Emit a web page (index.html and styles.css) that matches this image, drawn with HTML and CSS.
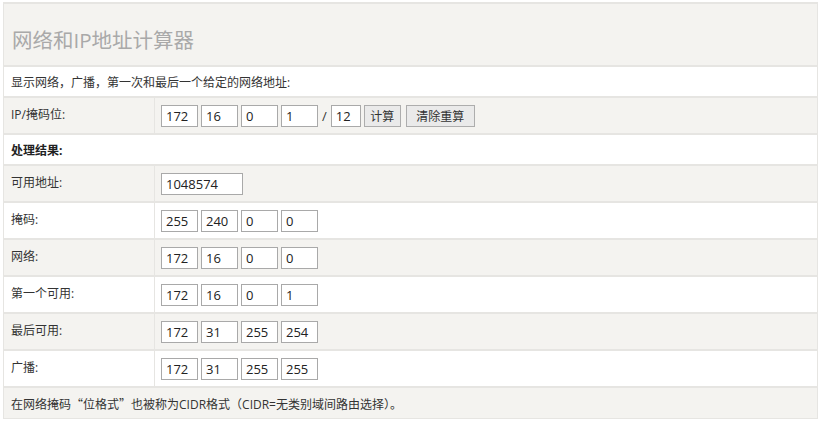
FILE: index.html
```html
<!DOCTYPE html>
<html lang="zh">
<head>
<meta charset="utf-8">
<title>网络和IP地址计算器</title>
<link rel="stylesheet" href="styles.css">
</head>
<body>
<div class="wrap">
<table class="calc">
  <tr class="head"><td colspan="2"><h1>网络和IP地址计算器</h1></td></tr>
  <tr class="white"><td colspan="2" class="desc">显示网络，广播，第一次和最后一个给定的网络地址:</td></tr>
  <tr class="gray">
    <td class="label">IP/掩码位:</td>
    <td class="field">
      <div class="inputs">
        <input class="oct" value="172"><input class="oct" value="16"><input class="oct" value="0"><input class="oct" value="1">
        <span class="slash">/</span>
        <input class="mask" value="12">
        <button class="btn">计算</button>
        <button class="btn wide">清除重算</button>
      </div>
    </td>
  </tr>
  <tr class="white"><td colspan="2" class="result">处理结果:</td></tr>
  <tr class="gray">
    <td class="label">可用地址:</td>
    <td class="field"><div class="inputs"><input class="count" value="1048574"></div></td>
  </tr>
  <tr class="white">
    <td class="label">掩码:</td>
    <td class="field"><div class="inputs"><input class="oct" value="255"><input class="oct" value="240"><input class="oct" value="0"><input class="oct" value="0"></div></td>
  </tr>
  <tr class="gray">
    <td class="label">网络:</td>
    <td class="field"><div class="inputs"><input class="oct" value="172"><input class="oct" value="16"><input class="oct" value="0"><input class="oct" value="0"></div></td>
  </tr>
  <tr class="white">
    <td class="label">第一个可用:</td>
    <td class="field"><div class="inputs"><input class="oct" value="172"><input class="oct" value="16"><input class="oct" value="0"><input class="oct" value="1"></div></td>
  </tr>
  <tr class="gray">
    <td class="label">最后可用:</td>
    <td class="field"><div class="inputs"><input class="oct" value="172"><input class="oct" value="31"><input class="oct" value="255"><input class="oct" value="254"></div></td>
  </tr>
  <tr class="white">
    <td class="label">广播:</td>
    <td class="field"><div class="inputs"><input class="oct" value="172"><input class="oct" value="31"><input class="oct" value="255"><input class="oct" value="255"></div></td>
  </tr>
  <tr class="gray foot"><td colspan="2" class="desc">在网络掩码<span class="cjk">“</span>位格式<span class="cjk">”</span>也被称为CIDR格式（CIDR=无类别域间路由选择）。</td></tr>
</table>
</div>
</body>
</html>
```
FILE: styles.css
```css
html, body {
  margin: 0;
  padding: 0;
  background: #fff;
}
body {
  font-family: "Open Sans", "Noto Sans CJK SC", sans-serif;
  font-size: 12px;
  color: #333;
}
.wrap {
  padding: 2px 2px 0 3px;
}
.calc {
  width: 815px;
  border-collapse: collapse;
  border-top: 2px solid #e6e5e2;
  border-left: 1px solid #e6e5e2;
  border-right: 1px solid #e6e5e2;
}
.calc td {
  border-bottom: 2px solid #e6e5e2;
  padding: 0 7px;
  vertical-align: middle;
}
.gray td { background: #f4f3f0; }
.white td { background: #fff; }
.head td {
  background: #f4f3f0;
  height: 61px;
  padding: 0 8px;
}
h1 {
  margin: 10px 0 0;
  font-weight: normal;
  font-size: 20.5px;
  color: #a9a9a9;
  line-height: 30px;
}
.desc { height: 29px; }
.result { height: 29px; font-weight: bold; color: #222; }
.label {
  width: 136px;
  height: 31px;
  border-right: 1px solid #e6e5e2;
  padding-bottom: 4px !important;
}
.field { padding: 0 6px !important; }
.inputs {
  display: flex;
  align-items: center;
  gap: 3px;
}
input {
  box-sizing: border-box;
  height: 22px;
  border: 1px solid #a9a9a9;
  background: #fff;
  font-family: "Open Sans", sans-serif;
  font-size: 13px;
  color: #222;
  padding: 0 4px;
  margin: 0;
}
.oct { width: 37px; }
.mask { width: 30px; }
.count { width: 82px; }
.slash {
  font-size: 13px;
  margin: 0 1px;
}
.btn {
  box-sizing: border-box;
  height: 22px;
  margin: 0;
  border: 1px solid #adadad;
  background: #eaeaea;
  font-family: "Noto Sans CJK SC", sans-serif;
  font-size: 12px;
  color: #333;
  padding: 0;
  line-height: 18px;
  width: 37px;
}
.btn.wide { width: 69px; margin-left: 2px; }
.cjk { font-family: "Noto Sans CJK SC", sans-serif; }
.foot td { height: 28px; padding-top: 2px; border-bottom: 1px solid #e6e5e2; }
```
